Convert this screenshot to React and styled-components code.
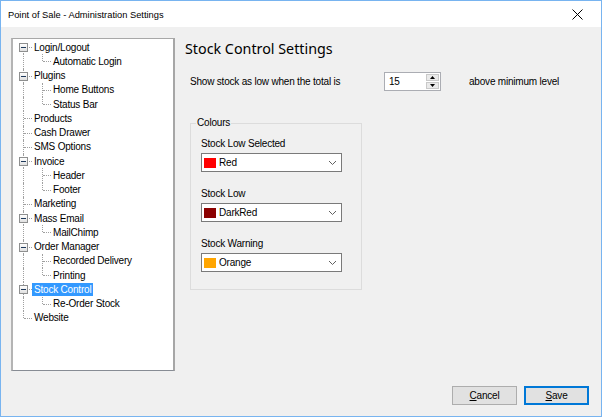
import React from "react";
import styled, { createGlobalStyle } from "styled-components";

const Global = createGlobalStyle`
  html, body { margin: 0; padding: 0; background: #fff; }
  body { font-family: "Liberation Sans", Arial, sans-serif; }
  * { box-sizing: border-box; }
`;

const Window = styled.div`
  width: 602px;
  height: 417px;
  border: 1px solid #78B4F0;
  display: flex;
  flex-direction: column;
  background: #F0F0F0;
  overflow: hidden;
`;

const TitleBar = styled.div`
  height: 26px;
  flex: none;
  background: #fff;
  display: flex;
  align-items: center;
  justify-content: space-between;
  padding: 1px 18px 0 7px;
`;

const TitleText = styled.span`
  font-family: "Liberation Sans", Arial, sans-serif;
  font-size: 9.3px;
  color: #000;
`;

const Client = styled.div`
  flex: 1;
  display: flex;
  flex-direction: column;
  padding: 11px 12px 11px 10px;
  gap: 15px;
`;

const Main = styled.div`
  display: flex;
  gap: 10px;
  height: 333px;
`;

const TreeBox = styled.div`
  width: 164px;
  height: 333px;
  background: #fff;
  border-top: 1px solid #A8A8A8;
  border-left: 2px solid #B4B4B4;
  border-right: 2px solid #A6A6A6;
  border-bottom: 1px solid #878C94;
  padding-top: 1px;
  font-size: 10px;
  letter-spacing: -0.2px;
  color: #000;
`;

const Row = styled.div`
  display: flex;
  align-items: center;
  height: 14.25px;
`;

const Seg = styled.span`
  position: relative;
  flex: none;
  width: 19px;
  align-self: stretch;
  &::before {
    content: "";
    display: ${(p) => (p.$v === "none" ? "none" : "block")};
    position: absolute;
    left: 10px;
    top: ${(p) => (p.$v === "bottom" ? "50%" : "0")};
    bottom: ${(p) => (p.$v === "top" ? "50%" : "0")};
    border-left: 1px dotted #A0A0A0;
  }
  &::after {
    content: "";
    display: ${(p) => (p.$h ? "block" : "none")};
    position: absolute;
    left: 11px;
    right: 0;
    top: 50%;
    border-top: 1px dotted #A0A0A0;
  }
`;

const Expander = styled.span`
  position: absolute;
  z-index: 1;
  left: 6px;
  top: 50%;
  margin-top: -4px;
  width: 9px;
  height: 9px;
  border: 1px solid #8E8F8F;
  background: linear-gradient(#fff, #E0E0E0);
  display: flex;
  align-items: center;
  justify-content: center;
  &::before {
    content: "";
    width: 5px;
    height: 1px;
    background: #1E395B;
  }
`;

const Label = styled.span`
  padding: 0 2px;
  line-height: 13px;
  height: 13px;
  white-space: nowrap;
  background: ${(p) => (p.$selected ? "#3399FF" : "transparent")};
  color: ${(p) => (p.$selected ? "#fff" : "#000")};
`;

const Content = styled.div`
  flex: 1;
  display: flex;
  flex-direction: column;
`;

const Heading = styled.h1`
  margin: 0;
  font-family: "Noto Sans", "Liberation Sans", sans-serif;
  font-weight: normal;
  font-size: 14.3px;
  line-height: 21px;
  color: #000;
`;

const FieldRow = styled.div`
  display: flex;
  align-items: center;
  margin: 13px 0 0 5px;
  font-size: 10px;
  letter-spacing: -0.2px;
  height: 19px;
`;

const FieldLabel = styled.span`
  width: ${(p) => p.$w}px;
  flex: none;
`;

const Spinner = styled.div`
  width: 57px;
  height: 19px;
  display: flex;
  border: 1px solid #ABADB3;
  background: #fff;
  margin-right: 28px;
  padding: 1px;
`;

const SpinValue = styled.span`
  flex: 1;
  padding-left: 3px;
  line-height: 15px;
`;

const SpinButtons = styled.div`
  width: 13px;
  display: flex;
  flex-direction: column;
  gap: 1px;
`;

const SpinBtn = styled.div`
  flex: 1;
  background: #EAEAEA;
  border: 1px solid #C9C9C9;
  display: flex;
  align-items: center;
  justify-content: center;
`;

const Group = styled.div`
  position: relative;
  margin: 32px 0 0 5px;
  width: 172px;
  border: 1px solid #DCDCDC;
  padding: 14px 19px 17px 10px;
  display: flex;
  flex-direction: column;
  gap: 16px;
  font-size: 10px;
  letter-spacing: -0.2px;
`;

const Legend = styled.span`
  position: absolute;
  top: -7px;
  left: 5px;
  padding: 0 1px;
  background: #F0F0F0;
  line-height: 12px;
`;

const Field = styled.div`
  display: flex;
  flex-direction: column;
  gap: 3px;
`;

const FieldCaption = styled.span`
  line-height: 12px;
`;

const Combo = styled.div`
  width: 141px;
  height: 19px;
  border: 1px solid #7A7A7A;
  background: #fff;
  display: flex;
  align-items: center;
  padding: 0 4px 0 2px;
`;

const Swatch = styled.span`
  width: 12px;
  height: 10px;
  background: ${(p) => p.$c};
  margin-right: 3px;
`;

const ComboText = styled.span`
  flex: 1;
`;

const Footer = styled.div`
  display: flex;
  justify-content: flex-end;
  gap: 7px;
`;

const Button = styled.button`
  width: 65px;
  height: 19px;
  padding: 0;
  font-family: "Liberation Sans", Arial, sans-serif;
  font-size: 10px;
  letter-spacing: -0.2px;
  color: #000;
  background: #E1E1E1;
  border: ${(p) => (p.$default ? "2px solid #0078D7" : "1px solid #ADADAD")};
  u { text-decoration: underline; }
`;

const tree = [
  { label: "Login/Logout", children: ["Automatic Login"] },
  { label: "Plugins", children: ["Home Buttons", "Status Bar"] },
  { label: "Products" },
  { label: "Cash Drawer" },
  { label: "SMS Options" },
  { label: "Invoice", children: ["Header", "Footer"] },
  { label: "Marketing" },
  { label: "Mass Email", children: ["MailChimp"] },
  { label: "Order Manager", children: ["Recorded Delivery", "Printing"] },
  { label: "Stock Control", children: ["Re-Order Stock"], selected: true },
  { label: "Website" },
];

function Tree() {
  const rows = [];
  tree.forEach((node, i) => {
    const first = i === 0;
    const last = i === tree.length - 1;
    const v = first ? "bottom" : last ? "top" : "full";
    rows.push(
      <Row key={node.label}>
        <Seg $v={v} $h>
          {node.children && <Expander />}
        </Seg>
        <Label $selected={node.selected}>{node.label}</Label>
      </Row>
    );
    (node.children || []).forEach((c, j) => {
      const lastChild = j === node.children.length - 1;
      rows.push(
        <Row key={c}>
          <Seg $v={last ? "none" : "full"} />
          <Seg $v={lastChild ? "top" : "full"} $h />
          <Label>{c}</Label>
        </Row>
      );
    });
  });
  return <TreeBox>{rows}</TreeBox>;
}

const Chevron = () => (
  <svg width="9" height="6" viewBox="0 0 9 6">
    <path d="M1 1 L4.5 4.5 L8 1" fill="none" stroke="#606060" strokeWidth="1" />
  </svg>
);

const colours = [
  { caption: "Stock Low Selected", name: "Red", c: "#FF0000" },
  { caption: "Stock Low", name: "DarkRed", c: "#8B0000" },
  { caption: "Stock Warning", name: "Orange", c: "#FFA500" },
];

export default function App() {
  return (
    <>
      <Global />
      <Window>
        <TitleBar>
          <TitleText>Point of Sale - Administration Settings</TitleText>
          <svg width="11" height="11" viewBox="0 0 11 11">
            <path d="M0.5 0.5 L10.5 10.5 M10.5 0.5 L0.5 10.5" stroke="#000" strokeWidth="1" />
          </svg>
        </TitleBar>
        <Client>
          <Main>
            <Tree />
            <Content>
              <Heading>Stock Control Settings</Heading>
              <FieldRow>
                <FieldLabel $w={194}>Show stock as low when the total is</FieldLabel>
                <Spinner>
                  <SpinValue>15</SpinValue>
                  <SpinButtons>
                    <SpinBtn>
                      <svg width="5" height="3" viewBox="0 0 5 3"><path d="M2.5 0 L5 3 L0 3 Z" fill="#000" /></svg>
                    </SpinBtn>
                    <SpinBtn>
                      <svg width="5" height="3" viewBox="0 0 5 3"><path d="M0 0 L5 0 L2.5 3 Z" fill="#000" /></svg>
                    </SpinBtn>
                  </SpinButtons>
                </Spinner>
                <span>above minimum level</span>
              </FieldRow>
              <Group>
                <Legend>Colours</Legend>
                {colours.map((c) => (
                  <Field key={c.caption}>
                    <FieldCaption>{c.caption}</FieldCaption>
                    <Combo>
                      <Swatch $c={c.c} />
                      <ComboText>{c.name}</ComboText>
                      <Chevron />
                    </Combo>
                  </Field>
                ))}
              </Group>
            </Content>
          </Main>
          <Footer>
            <Button><u>C</u>ancel</Button>
            <Button $default><u>S</u>ave</Button>
          </Footer>
        </Client>
      </Window>
    </>
  );
}
